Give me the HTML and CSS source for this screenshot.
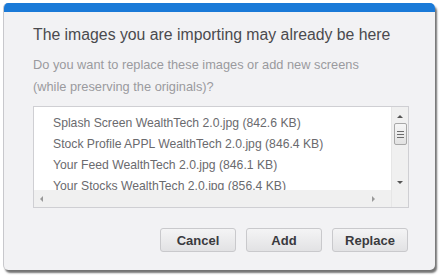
FILE: index.html
```html
<!DOCTYPE html>
<html>
<head>
<meta charset="utf-8">
<link rel="stylesheet" href="styles.css">
</head>
<body>
<div class="dialog">
  <div class="topbar"></div>
  <div class="content">
    <h1 class="title">The images you are importing may already be here</h1>
    <p class="question">Do you want to replace these images or add new screens<br>(while preserving the originals)?</p>
    <div class="listbox">
      <div class="listmain">
        <ul class="items">
          <li>Splash Screen WealthTech 2.0.jpg (842.6 KB)</li>
          <li>Stock Profile APPL WealthTech 2.0.jpg (846.4 KB)</li>
          <li>Your Feed WealthTech 2.0.jpg (846.1 KB)</li>
          <li>Your Stocks WealthTech 2.0.jpg (856.4 KB)</li>
        </ul>
        <div class="vscroll">
          <span class="arrow up"></span>
          <span class="thumb"><i></i><i></i><i></i></span>
          <span class="track"></span>
          <span class="arrow down"></span>
        </div>
      </div>
      <div class="hscroll">
        <span class="arrow left"></span>
        <span class="htrack"></span>
        <span class="arrow right"></span>
        <span class="corner"></span>
      </div>
    </div>
    <div class="buttons">
      <button class="btn">Cancel</button>
      <button class="btn">Add</button>
      <button class="btn">Replace</button>
    </div>
  </div>
</div>
</body>
</html>
```
FILE: styles.css
```css
* { box-sizing: border-box; }
html, body { margin: 0; padding: 0; background: #ffffff; }
body {
  width: 442px; height: 280px; overflow: hidden;
  padding: 3px 0 0 3px;
  font-family: "Liberation Sans", Arial, sans-serif;
}
.dialog {
  width: 432px; height: 267px;
  background: #f2f2f4;
  border-radius: 5px;
  border-left: 1px solid #c8c8cc;
  box-shadow: 2px 3px 2px rgba(0,0,0,0.55);
  overflow: hidden;
  display: flex; flex-direction: column;
}
.topbar { height: 9px; background: #1a7ad8; flex: none; }
.content { padding: 0 26px 0 29px; display: flex; flex-direction: column; }
.title {
  margin: 13px 0 0 0;
  font-size: 15.8px; font-weight: normal; color: #4a4a4e;
  line-height: 20px;
}
.question {
  margin: 9px 0 0 0;
  font-size: 12.8px; color: #9a9a9e; line-height: 22px;
}
.listbox {
  margin-top: 8px;
  width: 376px; height: 102px;
  border: 1px solid #cfcfd3;
  background: #fff;
  display: flex; flex-direction: column;
}
.listmain { flex: 1; display: flex; min-height: 0; overflow: hidden; }
.items {
  list-style: none; margin: 0; padding: 6px 0 0 19px; flex: 1;
  font-size: 12.2px; color: #6a6a6e; line-height: 21px;
  white-space: nowrap; overflow: hidden;
}
.vscroll {
  width: 17px; flex: none; background: #f0f0f0;
  display: flex; flex-direction: column; align-items: center;
  border-left: 1px solid #e6e6e6;
}
.track { flex: 1; }
.arrow { width: 0; height: 0; display: block; }
.arrow.up { margin-top: 8px; border-left: 3px solid transparent; border-right: 3px solid transparent; border-bottom: 3px solid #555; }
.arrow.down { margin-bottom: 6px; border-left: 3px solid transparent; border-right: 3px solid transparent; border-top: 3px solid #555; }
.thumb {
  margin-top: 5px; width: 13px; height: 22px;
  border: 1px solid #a8a8a8; border-radius: 2px;
  background: linear-gradient(#f6f6f6, #e2e2e2);
  display: flex; flex-direction: column; align-items: center; justify-content: center; gap: 2px;
}
.thumb i { display: block; width: 7px; height: 1px; background: #6d6d6d; }
.hscroll {
  height: 17px; flex: none; background: #f0f0f0;
  display: flex; align-items: center;
}
.htrack { flex: 1; }
.arrow.left { margin-left: 6px; border-top: 3px solid transparent; border-bottom: 3px solid transparent; border-right: 3px solid #999; }
.arrow.right { margin-right: 16px; border-top: 3px solid transparent; border-bottom: 3px solid transparent; border-left: 3px solid #999; }
.corner { width: 17px; height: 17px; background: #f0f0f0; border-left: 1px solid #e6e6e6; }
.buttons {
  margin-top: 20px;
  display: flex; justify-content: flex-end; gap: 10px;
  padding-right: 1px;
}
.btn {
  width: 76px; height: 24px;
  border: 1px solid #c9c9cc; border-radius: 3px;
  background: linear-gradient(#f4f4f5, #e2e2e4);
  font-family: "Liberation Sans", Arial, sans-serif;
  font-size: 13px; font-weight: bold; color: #3a3a3e;
  padding: 0;
}
```
